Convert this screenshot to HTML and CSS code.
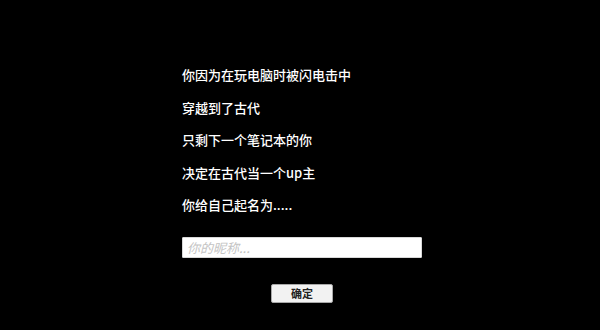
FILE: index.html
```html
<!DOCTYPE html>
<html lang="zh">
<head>
<meta charset="utf-8">
<link rel="stylesheet" href="styles.css">
</head>
<body>
<main class="intro">
  <div class="story">
    <p class="line">你因为在玩电脑时被闪电击中</p>
    <p class="line">穿越到了古代</p>
    <p class="line">只剩下一个笔记本的你</p>
    <p class="line">决定在古代当一个up主</p>
    <p class="line">你给自己起名为.....</p>
  </div>
  <input class="name-input" type="text" placeholder="你的昵称...">
  <button class="confirm" type="button">确定</button>
</main>
</body>
</html>
```
FILE: styles.css
```css
html, body {
  margin: 0;
  padding: 0;
  background: #000;
  width: 600px;
  height: 330px;
  overflow: hidden;
}
.intro {
  width: 240px;
  margin-left: 182px;
  padding-top: 59px;
  display: flex;
  flex-direction: column;
  font-family: "Noto Sans CJK SC", "Noto Sans", sans-serif;
}
.story {
  display: flex;
  flex-direction: column;
}
.line {
  margin: 0;
  color: #fff;
  font-size: 13px;
  line-height: 32.5px;
  font-weight: 500;
  white-space: nowrap;
}
.name-input {
  box-sizing: border-box;
  margin-top: 15.5px;
  width: 240px;
  height: 21px;
  border: 1px solid #d8d8d8;
  border-radius: 1px;
  background: #fff;
  padding: 0 4px;
  font-family: "Noto Sans CJK SC", sans-serif;
  font-size: 13px;
  font-style: italic;
  outline: none;
}
.name-input::placeholder {
  color: #c4c4c4;
}
.confirm {
  box-sizing: border-box;
  align-self: center;
  margin-top: 26px;
  width: 62px;
  height: 19px;
  padding: 0;
  background: #f2f2f2;
  border: 1px solid #a8a8a8;
  border-radius: 2px;
  color: #222;
  font-family: "Noto Sans CJK SC", sans-serif;
  font-size: 11px;
  font-weight: 700;
  line-height: 17px;
}
```
